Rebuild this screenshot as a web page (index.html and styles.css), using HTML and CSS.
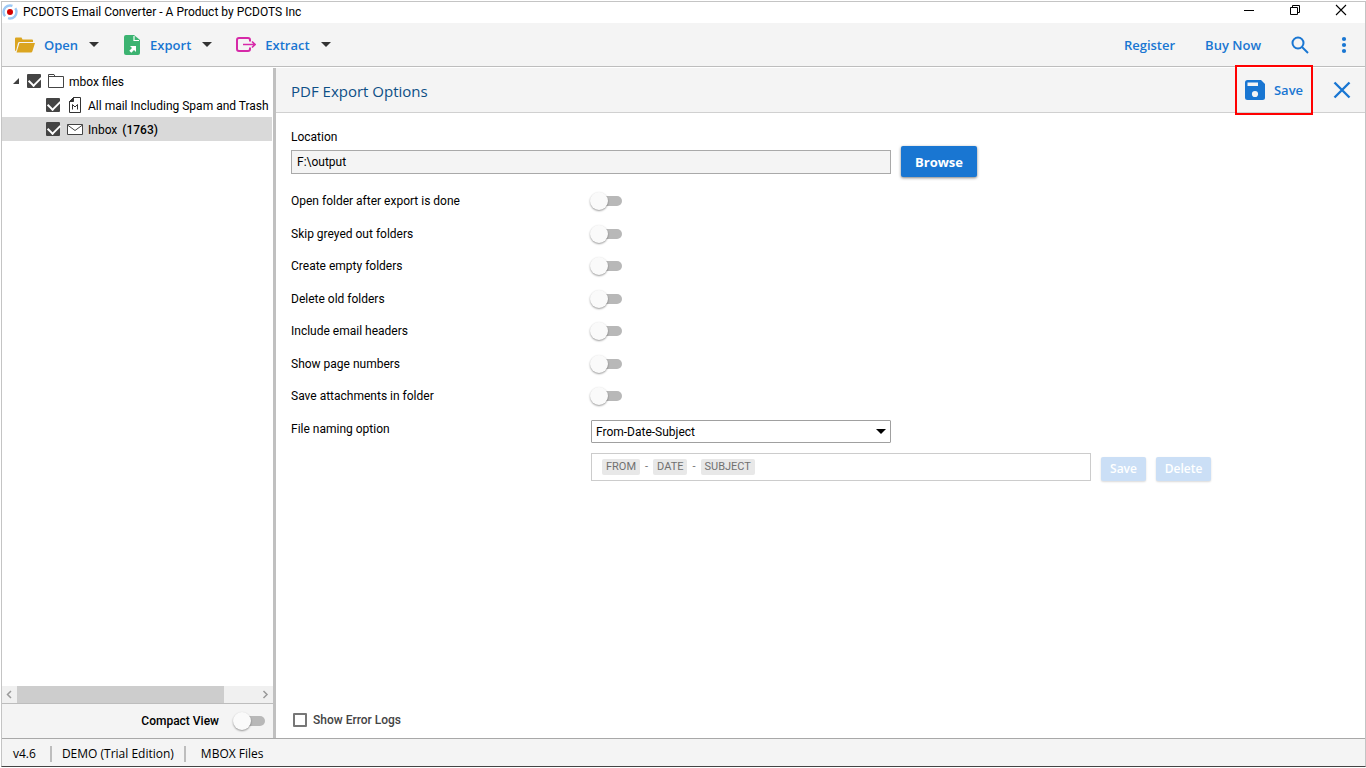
FILE: index.html
```html
<!DOCTYPE html>
<html lang="en">
<head>
    <meta charset="UTF-8">
    <meta name="viewport" content="width=device-width, initial-scale=1.0">
    <title>PCDOTS Email Converter</title>
    <link rel="stylesheet" href="styles.css">
</head>
<body>
<div class="window">

    <header class="title-bar">
        <svg class="app-logo" width="16" height="16" viewBox="0 0 16 16">
            <circle cx="8" cy="8" r="6.5" fill="none" stroke="#9cc8f5" stroke-width="2.4" stroke-dasharray="17 3.4" stroke-dashoffset="5"/>
            <circle cx="8" cy="8" r="3" fill="#d40000"/>
        </svg>
        <span class="app-title">PCDOTS Email Converter - A Product by PCDOTS Inc</span>
        <div class="window-controls">
            <button type="button" aria-label="Minimize">
                <svg width="12" height="12" viewBox="0 0 12 12"><path d="M1 6.5h10" stroke="#000"/></svg>
            </button>
            <button type="button" aria-label="Restore">
                <svg width="12" height="12" viewBox="0 0 12 12" fill="none" stroke="#000"><path d="M1.5 3.500h7v7h-7zM3.500 3.500v-2h7v7h-2"/></svg>
            </button>
            <button type="button" aria-label="Close">
                <svg width="12" height="12" viewBox="0 0 12 12"><path d="M1 1l10 10M11 1L1 11" stroke="#000" stroke-width="1.100"/></svg>
            </button>
        </div>
    </header>

    <nav class="toolbar">
        <button type="button" class="tool tool-open">
            <svg width="20" height="16" viewBox="0 0 20 16" fill="#dba520">
                <path d="M0 13V1.500Q0 .5 1 .5h5.500l1 2H17q1 0 1 1V5H4.500Q3.300 5 3 6L1 14Q0 14 0 13z"/>
                <path d="M4.500 6H20l-2.600 8.200q-.3 1.300-1.500 1.300H1.500z"/>
            </svg>
            <span>Open</span>
            <i class="caret"></i>
        </button>
        <button type="button" class="tool tool-export">
            <svg width="18" height="20" viewBox="0 0 18 20">
                <path d="M3 0h8l6 5v13q0 2-2 2H3q-2 0-2-2V2q0-2 2-2z" fill="#3cb371"/>
                <path d="M11 1v4.500h5" fill="none" stroke="#fff" stroke-width="1.200"/>
                <path d="M7 11h6v6l-2-2-2.700 2.700-2-2L9 13z" fill="#fff"/>
            </svg>
            <span>Export</span>
            <i class="caret"></i>
        </button>
        <button type="button" class="tool tool-extract">
            <svg width="20" height="16" viewBox="0 0 20 16" fill="none" stroke="#d629a8" stroke-width="2">
                <path d="M14 4.500V3q0-2-2-2H3Q1 1 1 3v9q0 2 2 2h9q2 0 2-2v-1.500"/>
                <path d="M7 7.500h12M16 4.500l3 3-3 3" stroke-width="1.600"/>
            </svg>
            <span>Extract</span>
            <i class="caret"></i>
        </button>
        <div class="toolbar-right">
            <a href="#">Register</a>
            <a href="#">Buy Now</a>
            <button type="button" aria-label="Search">
                <svg width="18" height="18" viewBox="0 0 18 18" fill="none" stroke="#1976d2" stroke-width="2"><circle cx="7" cy="7" r="5.500"/><path d="M11 11l6 6"/></svg>
            </button>
            <button type="button" class="more-button" aria-label="More">
                <svg width="6" height="18" viewBox="0 0 6 18" fill="#1976d2"><circle cx="3" cy="3" r="2.100"/><circle cx="3" cy="9" r="2.100"/><circle cx="3" cy="15" r="2.100"/></svg>
            </button>
        </div>
    </nav>

    <main class="main">
        <aside class="sidebar">
            <div class="tree">
                <div class="tree-row">
                    <svg class="expander" width="8" height="8" viewBox="0 0 8 8"><path d="M7 1v6H1z" fill="#404040"/></svg>
                    <input type="checkbox" class="tree-check" id="root" checked>
                    <svg width="16" height="16" viewBox="0 0 16 16" fill="#fff" stroke="#444"><path d="M.5 14.500V1.500h5.500l1 2h8.500v11zM.5 3.500H7"/></svg>
                    <label for="root">mbox files</label>
                </div>
                <div class="tree-row child">
                    <input type="checkbox" class="tree-check" id="allmail" checked>
                    <svg width="16" height="16" viewBox="0 0 16 16" fill="none" stroke="#333"><path d="M2.500 15.500v-11l4-4h7v15z"/><path d="M2.500 4.500l4-4v4z" fill="#333"/><path d="M5.500 12.500v-5L8 10l2.500-2.500v5"/></svg>
                    <label for="allmail">All mail Including Spam and Trash</label>
                </div>
                <div class="tree-row child selected">
                    <input type="checkbox" class="tree-check" id="inbox" checked>
                    <svg width="16" height="16" viewBox="0 0 16 16" fill="#fff" stroke="#444"><path d="M.5 3.500h15v10H.5z"/><path d="M.5 4L8 9.500 15.500 4" fill="none"/></svg>
                    <label for="inbox">Inbox <b>(1763)</b></label>
                </div>
            </div>
            <div class="scrollbar">
                <svg width="15" height="17" viewBox="0 0 15 17" fill="none" stroke="#999" stroke-width="1.500"><path d="M9 5L5.500 8.500 9 12"/></svg>
                <div class="scroll-track"><div class="scroll-thumb"></div></div>
                <svg width="15" height="17" viewBox="0 0 15 17" fill="none" stroke="#999" stroke-width="1.500"><path d="M5.500 5L9 8.500 5.500 12"/></svg>
            </div>
            <div class="sidebar-footer">
                <label for="compact">Compact View</label>
                <input type="checkbox" class="switch" id="compact">
            </div>
        </aside>

        <section class="panel">
            <div class="panel-header">
                <h1>PDF Export Options</h1>
                <button type="button" class="save-button">
                    <svg width="20" height="20" viewBox="0 0 20 20"><path d="M2.500 0H16l4 4v13.500q0 2.500-2.500 2.500h-15Q0 20 0 17.500v-15Q0 0 2.500 0z" fill="#1976d2"/><path d="M2.500 2.500H13V6H2.500z" fill="#f4f4f4"/><circle cx="10" cy="14" r="3.100" fill="#f4f4f4"/></svg>
                    <span>Save</span>
                </button>
                <button type="button" class="close-button" aria-label="Close options">
                    <svg width="18" height="18" viewBox="0 0 18 18"><path d="M1.500 1.500l15 15M16.500 1.500l-15 15" stroke="#1976d2" stroke-width="2.400"/></svg>
                </button>
            </div>

            <form class="options">
                <label for="location">Location</label>
                <div class="location-row">
                    <input type="text" class="location-input" id="location" value="F:\output" readonly>
                    <button type="button" class="browse-button">Browse</button>
                </div>

                <div class="option-list">
                    <div class="option"><label for="openFolder">Open folder after export is done</label><input type="checkbox" class="switch" id="openFolder"></div>
                    <div class="option"><label for="skipGreyed">Skip greyed out folders</label><input type="checkbox" class="switch" id="skipGreyed"></div>
                    <div class="option"><label for="createEmpty">Create empty folders</label><input type="checkbox" class="switch" id="createEmpty"></div>
                    <div class="option"><label for="deleteOld">Delete old folders</label><input type="checkbox" class="switch" id="deleteOld"></div>
                    <div class="option"><label for="headers">Include email headers</label><input type="checkbox" class="switch" id="headers"></div>
                    <div class="option"><label for="pageNumbers">Show page numbers</label><input type="checkbox" class="switch" id="pageNumbers"></div>
                    <div class="option"><label for="attachments">Save attachments in folder</label><input type="checkbox" class="switch" id="attachments"></div>
                    <div class="option naming">
                        <label for="naming">File naming option</label>
                        <div class="select-wrap">
                            <select id="naming"><option>From-Date-Subject</option></select>
                        </div>
                    </div>
                </div>

                <div class="pattern-row">
                    <div class="pattern"><span class="tag">FROM</span><span>-</span><span class="tag">DATE</span><span>-</span><span class="tag">SUBJECT</span></div>
                    <button type="button" class="small-button" disabled>Save</button>
                    <button type="button" class="small-button delete" disabled>Delete</button>
                </div>

                <div class="logs">
                    <input type="checkbox" class="logs-check" id="logs">
                    <label for="logs">Show Error Logs</label>
                </div>
            </form>
        </section>
    </main>

    <footer class="status-bar">
        <span class="version">v4.6</span>
        <span class="edition">DEMO (Trial Edition)</span>
        <span class="source">MBOX Files</span>
    </footer>

</div>
</body>
</html>
```

FILE: styles.css
```css
* {
    box-sizing: border-box;
}

body {
    margin: 0;
    padding: 1px 0 1px 1px;
    height: 100vh;
    font-family: Roboto, "Open Sans", sans-serif;
    font-size: 12px;
    line-height: 16px;
    color: #000;
    background-color: #fff;
}

button, input, select {
    font: inherit;
    margin: 0;
}

button {
    padding: 0;
    border: none;
    background: none;
    color: inherit;
}

svg {
    display: block;
    flex-shrink: 0;
}

.window {
    display: flex;
    flex-direction: column;
    height: 100%;
    border: 1px solid #c4c4c4;
    border-bottom-color: #444;
}

/* Title bar */
.title-bar {
    display: flex;
    align-items: center;
    height: 21px;
    padding-bottom: 2px;
}

.app-title {
    margin-left: 5px;
}

.window-controls {
    display: flex;
    gap: 34px;
    margin-left: auto;
    margin-right: 18px;
    padding-bottom: 3px;
}

/* Toolbar */
.toolbar {
    display: flex;
    align-items: center;
    height: 44px;
    padding: 0 18px 0 13px;
    background-color: #f4f4f4;
    border-bottom: 1px solid #bdbdbd;
    font-family: "Open Sans", sans-serif;
    font-size: 13px;
    font-weight: 600;
    color: #1976d2;
}

.tool {
    display: flex;
    align-items: center;
    gap: 9px;
}

.tool-export,
.tool-extract {
    margin-left: 24px;
}

.caret {
    margin-left: 2px;
    border: 5px solid transparent;
    border-top-color: #333;
    border-bottom: none;
}

.toolbar-right {
    display: flex;
    align-items: center;
    gap: 30px;
    margin-left: auto;
}

.toolbar-right a {
    color: #1976d2;
    text-decoration: none;
}

.more-button {
    margin-left: 2px;
}

/* Main area */
.main {
    display: flex;
    flex: 1;
    min-height: 0;
    padding-top: 1px;
}

.sidebar {
    display: flex;
    flex-direction: column;
    width: 274px;
    flex-shrink: 0;
    border-right: 3px solid #c0c0c0;
}

.tree {
    flex: 1;
    padding: 1px 1px 0 0;
}

.tree-row {
    display: flex;
    align-items: center;
    height: 24px;
    padding-left: 10px;
    white-space: nowrap;
}

.tree-row label {
    margin-left: 5px;
    padding-top: 2px;
}

.tree-row b {
    margin-left: 2px;
    font-weight: 500;
}

.child {
    padding-left: 44px;
}

.selected {
    background-color: #d9d9d9;
}

.expander {
    margin-right: 7px;
}

.tree-check {
    appearance: none;
    width: 14px;
    height: 14px;
    margin-right: 7px;
    border-radius: 1px;
    background-color: #444;
}

.tree-check:checked::before {
    content: "";
    display: block;
    width: 10px;
    height: 6px;
    margin: 2px;
    border: solid #fff;
    border-width: 0 0 2px 2px;
    transform: rotate(-45deg);
}

.scrollbar {
    display: flex;
    height: 17px;
    background-color: #f0f0f0;
}

.scroll-track {
    flex: 1;
}

.scroll-thumb {
    width: 86%;
    height: 100%;
    background-color: #cdcdcd;
}

.sidebar-footer {
    display: flex;
    align-items: center;
    justify-content: flex-end;
    gap: 14px;
    height: 35px;
    padding-right: 8px;
    background-color: #f4f4f4;
    border-top: 1px solid #bdbdbd;
    font-weight: 500;
}

/* Toggle switch */
.switch {
    appearance: none;
    position: relative;
    width: 32px;
    height: 18px;
}

.switch::before {
    content: "";
    position: absolute;
    inset: 4px 0 4px 8px;
    border-radius: 5px;
    background-color: #b8b8b8;
}

.switch::after {
    content: "";
    position: absolute;
    left: 0;
    top: 0;
    width: 18px;
    height: 18px;
    border-radius: 50%;
    background-color: #fafafa;
    box-shadow: 0 1px 2px rgba(0, 0, 0, 0.4);
}

/* Export options panel */
.panel {
    display: flex;
    flex-direction: column;
    flex: 1;
    min-width: 0;
}

.panel-header {
    display: flex;
    align-items: center;
    height: 45px;
    padding: 0 14px 0 15px;
    background-color: #f4f4f4;
    border-bottom: 1px solid #d0d0d0;
    font-family: "Open Sans", sans-serif;
}

.panel-header h1 {
    margin: 0 auto 0 0;
    padding-top: 2px;
    font-size: 15px;
    font-weight: 400;
    color: #0d4f86;
}

.save-button {
    position: relative;
    display: flex;
    align-items: center;
    justify-content: center;
    gap: 9px;
    width: 78px;
    height: 44px;
    margin-right: 20px;
    font-size: 13px;
    font-weight: 600;
    color: #1976d2;
}

.save-button::after {
    content: "";
    position: absolute;
    inset: -3px 0;
    border: 2px solid #f00;
}

.options {
    display: flex;
    flex-direction: column;
    align-items: flex-start;
    flex: 1;
    padding: 16px 15px 10px;
}

.location-row {
    display: flex;
    align-items: center;
    gap: 10px;
    margin-top: 1px;
}

.location-input {
    width: 600px;
    height: 24px;
    padding: 1px 5px 0;
    border: 1px solid #a9a9a9;
    background-color: #f4f4f4;
}

.browse-button {
    width: 76px;
    height: 31px;
    border-radius: 2px;
    background-color: #1976d2;
    box-shadow: 0 1px 3px rgba(0, 0, 0, 0.5);
    font-family: "Open Sans", sans-serif;
    font-size: 13px;
    font-weight: 700;
    color: #fff;
}

.option-list {
    display: grid;
    grid-auto-rows: 1fr;
    height: 260px;
    margin-top: 8px;
}

.option {
    display: grid;
    grid-template-columns: 299px auto;
    align-items: center;
}

.naming {
    grid-template-columns: 300px auto;
}

.select-wrap {
    position: relative;
    padding-top: 5px;
}

.select-wrap::after {
    content: "";
    position: absolute;
    right: 5px;
    top: 14px;
    border: 5px solid transparent;
    border-top-color: #000;
    border-bottom: none;
    pointer-events: none;
}

.select-wrap select {
    display: block;
    appearance: none;
    width: 300px;
    height: 23px;
    padding: 1px 4px 0;
    border: 1px solid #a0a0a0;
    border-radius: 1px;
    background-color: #fff;
    color: #000;
}

.pattern-row {
    display: flex;
    align-items: center;
    gap: 10px;
    margin: 8px 0 0 300px;
}

.pattern {
    display: flex;
    align-items: center;
    gap: 5px;
    width: 500px;
    height: 28px;
    padding: 0 10px;
    border: 1px solid #ccc;
    font-size: 11px;
    color: #707070;
}

.tag {
    padding: 0 4px;
    border-radius: 2px;
    background-color: #e8e8e8;
}

.small-button {
    width: 45px;
    height: 24px;
    margin-top: 4px;
    border-radius: 2px;
    background-color: #cbdff6;
    box-shadow: 0 1px 2px rgba(0, 0, 0, 0.15);
    font-family: "Open Sans", sans-serif;
    font-weight: 600;
    color: #fff;
}

.small-button.delete {
    width: 55px;
}

.logs {
    display: flex;
    align-items: center;
    gap: 6px;
    margin-top: auto;
    padding-left: 2px;
    font-weight: 500;
    color: #444;
}

.logs-check {
    appearance: none;
    width: 14px;
    height: 14px;
    border: 2px solid #777;
    border-radius: 1px;
    background-color: #fff;
}

/* Status bar */
.status-bar {
    display: flex;
    align-items: center;
    height: 28px;
    padding-top: 2px;
    padding-left: 11px;
    background-color: #f4f4f4;
    border-top: 1px solid #a8a8a8;
    font-family: "Open Sans", sans-serif;
    font-weight: 500;
}

.version,
.edition {
    padding-right: 14px;
    border-right: 2px solid #bdbdbd;
}

.edition {
    padding: 0 10px;
}

.source {
    padding-left: 15px;
}
```
